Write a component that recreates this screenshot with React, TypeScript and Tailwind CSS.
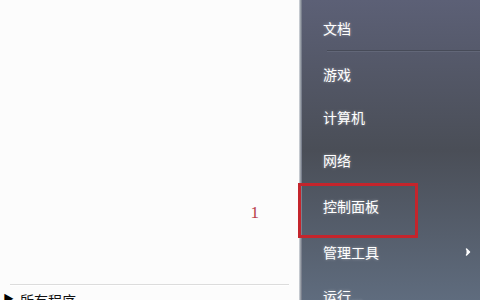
import { ChevronRight } from 'lucide-react';

const items = [
  { label: '文档', h: 'h-[44px]' },
  { label: '游戏', h: 'h-[44px]' },
  { label: '计算机', h: 'h-[42px]' },
  { label: '网络', h: 'h-[44px]' },
  { label: '控制面板', h: 'h-[48px]' },
  { label: '管理工具', h: 'h-[44px]', arrow: true },
  { label: '运行...', h: 'h-[44px]' },
];

export default function App() {
  return (
    <div className="relative flex w-[480px] h-[300px] overflow-hidden font-['Noto_Sans_CJK_SC','Noto_Sans',sans-serif]">
      {/* Left pane */}
      <div className="w-[299px] h-full bg-[#fcfcfc] flex flex-col">
        <div className="flex-1 flex items-center justify-end pr-[40px] pt-[142px]">
          <span className="text-[#b8404a] text-[17px] font-['Liberation_Serif',serif]">1</span>
        </div>
        <div className="mx-[10px] h-[2px] bg-[#dcdcdc] border-b border-white" />
        <div className="h-[7px] flex items-start pl-[3px] gap-[6px] mt-[7px]">
          <span className="text-[11px] leading-none text-black">▶</span>
          <span className="text-[14px] leading-none text-[#111]">所有程序</span>
        </div>
      </div>

      {/* Divider */}
      <div className="w-[3px] h-full bg-gradient-to-r from-[#d9dde2] via-[#9aa0a8] to-[#6a7080]" />

      {/* Right pane */}
      <div className="flex-1 h-full bg-gradient-to-b from-[#5c6076] via-[#4a4e57] to-[#5f6c7e] pt-[6px] pl-[21px]">
        {items.map((item, i) => (
          <div key={item.label}>
            <div className={`${item.h} flex items-center justify-between pr-[6px]`}>
              <span className="text-white text-[14px] [text-shadow:0_0_3px_rgba(255,255,255,0.45)]">
                {item.label}
              </span>
              {item.arrow && <ChevronRight className="w-3 h-3 text-white fill-white" strokeWidth={3} />}
            </div>
            {i === 0 && <div className="ml-[4px] h-[2px] bg-[#474b58] border-b border-[#626778]" />}
          </div>
        ))}
      </div>

      {/* Annotation box */}
      <div className="absolute left-[298px] top-[183px] w-[120px] h-[55px] border-[3px] border-[#c4252c]" />
    </div>
  );
}
